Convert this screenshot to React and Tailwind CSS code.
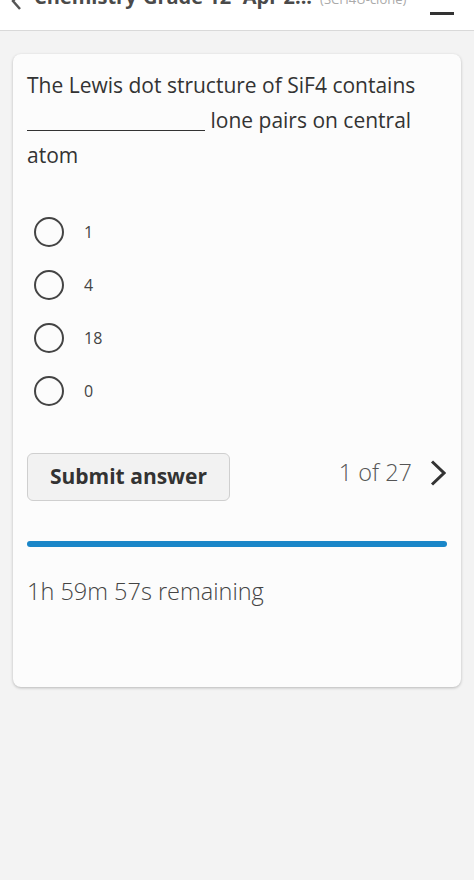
const options = ['1', '4', '18', '0']

export default function App() {
  return (
    <div className="min-h-[880px] bg-[#f3f3f3] font-['Open_Sans',sans-serif]">
      <div className="h-[31px] overflow-hidden bg-white border-b border-[#d9d9d9] relative">
        <svg className="absolute left-[10px] top-[-8px]" width="12" height="18" viewBox="0 0 12 18">
          <polyline points="10,1 3,9 10,17" fill="none" stroke="#555" strokeWidth="2.5" />
        </svg>
        <div className="absolute left-[34px] top-[-13px] flex items-baseline whitespace-nowrap leading-none">
          <span className="text-[20px] font-bold text-[#4a4a4a]">Chemistry-Grade 12 -Apr 2...</span>
          <span className="ml-[8px] text-[13px] text-[#aaa]">(SCH4U-clone)</span>
        </div>
        <div className="absolute left-[430px] top-[12px] w-[24px] h-[3px] bg-[#333]" />
      </div>

      <div className="px-[13px] pt-[23px]">
        <div className="bg-[#fcfcfc] rounded-[8px] shadow-[0_1px_3px_rgba(0,0,0,0.25)] px-[14px] pt-[14px] h-[633px]">
          <p className="text-[21px] leading-[35px] text-[#333]">
            The Lewis dot structure of SiF4 contains{' '}
            <span className="inline-block w-[178px] border-b border-[#333] align-baseline mb-[-3px]" />{' '}
            lone pairs on central atom
          </p>

          <div className="mt-[44px] flex flex-col gap-[23px]">
            {options.map((opt) => (
              <div key={opt} className="flex items-center gap-[20px] pl-[7px]">
                <div className="w-[30px] h-[30px] rounded-full border-[2.5px] border-[#444]" />
                <span className="text-[16px] text-[#444]">{opt}</span>
              </div>
            ))}
          </div>

          <div className="mt-[47px] flex items-start justify-between">
            <button className="w-[203px] h-[48px] rounded-[6px] bg-[#f2f2f2] border border-[#cfcfcf] text-[21px] font-bold text-[#333]">
              Submit answer
            </button>
            <div className="flex items-center gap-[18px] mt-[2px]">
              <span className="text-[23.5px] font-light text-[#555]">1 of 27</span>
              <svg width="16" height="26" viewBox="0 0 16 26" className="mr-[1px]">
                <polyline points="2,1.5 14,13 2,24.5" fill="none" stroke="#333" strokeWidth="3" />
              </svg>
            </div>
          </div>

          <div className="mt-[40px] h-[6px] rounded-full bg-[#1a86c8]" />

          <div className="mt-[27px] text-[23.5px] font-light text-[#444]">1h 59m 57s remaining</div>
        </div>
      </div>
    </div>
  )
}
